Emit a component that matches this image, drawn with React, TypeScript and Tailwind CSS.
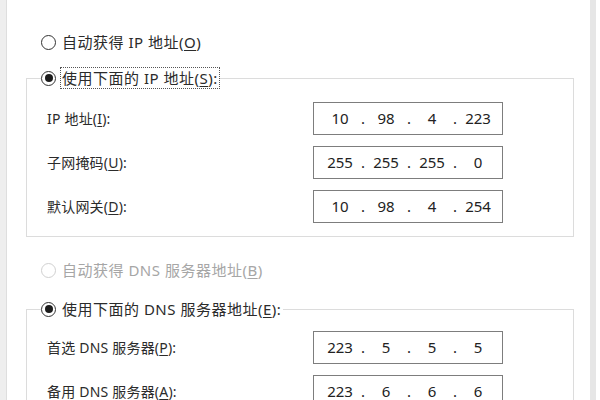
import { Fragment, ReactNode } from "react";

const fontStack = "font-['Noto_Sans','Noto_Sans_CJK_SC',sans-serif]";

function Radio({ checked = false, disabled = false }: { checked?: boolean; disabled?: boolean }) {
  return (
    <span
      className={`flex h-[15px] w-[15px] shrink-0 items-center justify-center rounded-full border bg-white ${
        disabled ? "border-[#d0d0d0]" : "border-[#333333]"
      }`}
    >
      {checked ? <span className="h-[8px] w-[8px] rounded-full bg-[#1c1c1c]" /> : null}
    </span>
  );
}

function Key({ k }: { k: string }) {
  return <span className="underline underline-offset-2">{k}</span>;
}

function RadioOption({
  children,
  checked,
  disabled,
  focused,
}: {
  children: ReactNode;
  checked?: boolean;
  disabled?: boolean;
  focused?: boolean;
}) {
  return (
    <div className="flex h-[24px] items-center gap-[4px]">
      <Radio checked={checked} disabled={disabled} />
      <span
        className={`border border-dotted px-[1px] text-[15px] leading-[20px] tracking-[0.5px] ${
          focused ? "border-[#555555]" : "border-transparent"
        } ${disabled ? "text-[#a6a6a6]" : "text-[#2b2b2b]"}`}
      >
        {children}
      </span>
    </div>
  );
}

function IpBox({ parts }: { parts: string[] }) {
  return (
    <div className="flex h-[33px] w-[190px] shrink-0 items-center border border-[#7d7d7d] bg-white pl-[6px] text-[15px] text-[#222222]">
      {parts.map((part, i) => (
        <Fragment key={i}>
          {i > 0 ? <span className="w-[6px] text-center">.</span> : null}
          <span className="w-[40px] text-center">{part}</span>
        </Fragment>
      ))}
    </div>
  );
}

function Row({ label, parts }: { label: ReactNode; parts: string[] }) {
  return (
    <div className="flex items-center">
      <span className="w-[266px] leading-[20px] tracking-[0.2px] text-[#2b2b2b]">{label}</span>
      <IpBox parts={parts} />
    </div>
  );
}

export default function App() {
  return (
    <div className={`flex h-[400px] w-[600px] overflow-hidden bg-white text-[14px] ${fontStack}`}>
      <div className="w-[7px] shrink-0 border-r border-[#dedede] bg-[#eeeeee]" />

      <div className="flex w-[583px] shrink-0 flex-col pt-[30px]">
        <div className="pl-[34px]">
          <RadioOption>
            自动获得 IP 地址(<Key k="O" />)
          </RadioOption>
        </div>

        <fieldset className="ml-[19px] mt-[12px] w-[548px] border border-[#dcdcdc] px-[20px] pb-[13px] pt-[12px]">
          <legend className="-ml-[6px]">
            <RadioOption checked focused>
              使用下面的 IP 地址(<Key k="S" />):
            </RadioOption>
          </legend>
          <div className="flex flex-col gap-[11px]">
            <Row label={<>IP 地址(<Key k="I" />):</>} parts={["10", "98", "4", "223"]} />
            <Row label={<>子网掩码(<Key k="U" />):</>} parts={["255", "255", "255", "0"]} />
            <Row label={<>默认网关(<Key k="D" />):</>} parts={["10", "98", "4", "254"]} />
          </div>
        </fieldset>

        <div className="mt-[21px] pl-[34px]">
          <RadioOption disabled>
            自动获得 DNS 服务器地址(<Key k="B" />)
          </RadioOption>
        </div>

        <fieldset className="ml-[19px] mt-[15px] w-[548px] border border-[#dcdcdc] px-[20px] pb-[13px] pt-[10px]">
          <legend className="-ml-[6px]">
            <RadioOption checked>
              使用下面的 DNS 服务器地址(<Key k="E" />):
            </RadioOption>
          </legend>
          <div className="flex flex-col gap-[11px]">
            <Row label={<>首选 DNS 服务器(<Key k="P" />):</>} parts={["223", "5", "5", "5"]} />
            <Row label={<>备用 DNS 服务器(<Key k="A" />):</>} parts={["223", "6", "6", "6"]} />
          </div>
        </fieldset>
      </div>

      <div className="w-[6px] shrink-0 bg-[#e6e6e6]" />
    </div>
  );
}
